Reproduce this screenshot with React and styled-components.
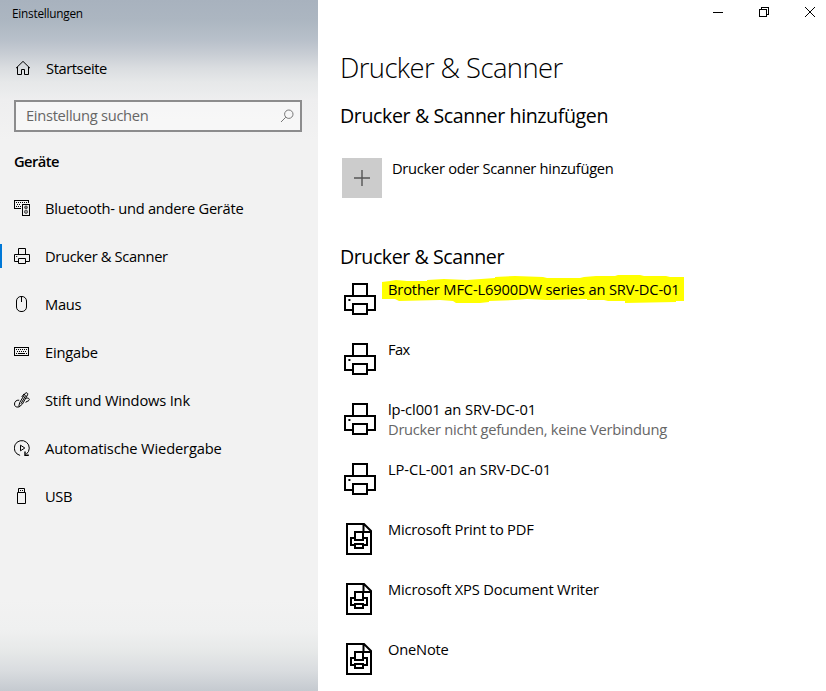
import React from "react";
import styled, { createGlobalStyle } from "styled-components";

const GlobalStyle = createGlobalStyle`
  * { box-sizing: border-box; }
  body {
    margin: 0;
    background: #fff;
    color: #000;
    font-family: "Open Sans", "Noto Sans", sans-serif;
    overflow: hidden;
  }
`;

const Window = styled.div`
  display: flex;
  width: 826px;
  height: 691px;
  background: #fff;
`;

const Sidebar = styled.aside`
  display: flex;
  flex-direction: column;
  width: 318px;
  flex: none;
  background:
    linear-gradient(
      180deg,
      #a8b2be 0,
      #acb6c1 20px,
      #b8c0ca 40px,
      #c8cdd4 54px,
      #dadde0 68px,
      #e6e8e9 82px,
      #eeeeef 100px,
      #f2f2f2 140px,
      #f2f2f2 600px,
      #eff0f0 630px,
      #e7e9e9 650px,
      #d9dcdf 671px,
      #c5cad0 691px
    );
`;

const Label = styled.span`
  font-size: 14.7px;
  line-height: 20px;
  letter-spacing: ${(p) => p.$tracking || 0}px;
  white-space: nowrap;
`;

const WindowTitle = styled.div`
  height: 44px;
  padding: 3px 0 0 12px;
  font-size: 11.8px;
  line-height: 20px;
  letter-spacing: -0.24px;
`;

const NavItem = styled.a`
  display: flex;
  align-items: center;
  gap: 15px;
  height: 48px;
  padding-left: 14px;
`;

const HomeItem = styled(NavItem)`
  gap: 14px;
  padding-left: 15px;
`;

const ActiveNavItem = styled(NavItem)`
  background: linear-gradient(#0078d7, #0078d7) 0 50% / 2px 24px no-repeat;
`;

const SearchBox = styled.div`
  display: flex;
  align-items: center;
  justify-content: space-between;
  width: 288px;
  height: 32px;
  margin: 8px 0 0 14px;
  padding: 0 6px 0 10px;
  border: 2px solid #8c8c8d;
  background: rgba(255, 255, 255, 0.45);
  color: #666;
`;

const SearchText = styled(Label)`
  padding-bottom: 2px;
`;

const Category = styled.h3`
  margin: 0;
  padding: 19px 0 13px 14px;
  font-size: 14.7px;
  font-weight: 600;
  line-height: 20px;
  letter-spacing: -0.54px;
`;

const Main = styled.main`
  display: flex;
  flex-direction: column;
  flex: 1;
  padding-left: 22px;
`;

const Caption = styled.div`
  display: flex;
  justify-content: flex-end;
  gap: 36px;
  height: 24px;
  padding: 7px 11px 0 0;
`;

const PageTitle = styled.h1`
  margin: 24px 0 0;
  padding-top: 7px;
  font-size: 27.4px;
  font-weight: 340;
  line-height: 40px;
  letter-spacing: -0.58px;
`;

const SectionTitle = styled.h2`
  margin: ${(p) => p.$top}px 0 0;
  font-size: 19.6px;
  font-weight: 400;
  line-height: 28px;
  letter-spacing: ${(p) => p.$tracking}px;
`;

const AddButton = styled.div`
  display: flex;
  gap: 10px;
  height: 40px;
  margin: 28px 0 0 2px;
`;

const AddTile = styled.div`
  display: grid;
  place-items: center;
  width: 40px;
  height: 40px;
  background: #ccc;
`;

const PrinterList = styled.div`
  display: flex;
  flex-direction: column;
  margin-top: 8px;
`;

const PrinterRow = styled.div`
  display: flex;
  height: 60px;
  padding-left: 4px;
`;

const IconCell = styled.div`
  width: 32px;
  height: 32px;
  margin: 4px 12px 0 0;
`;

const PrinterText = styled.div`
  position: relative;
  display: flex;
  flex-direction: column;
`;

const PrinterName = styled(Label)`
  position: relative;
`;

const PrinterStatus = styled(Label)`
  color: #666;
`;

const MarkerShape = styled.svg`
  position: absolute;
  left: -6px;
  top: -5px;
`;

const Icon = styled.svg`
  display: block;
  flex: none;
  fill: none;
  stroke: ${(p) => p.$color || "#000"};
`;

const crisp = { shapeRendering: "crispEdges" };

function PrinterIcon({ size }) {
  return (
    <Icon width={size} height={size} viewBox="0 0 16 16">
      <path d="M4.5 6.5V.5H11.5V6.5M4.5 13.5H.5V6.5H15.5V13.5H11.5M4.5 10.5H11.5V15.5H4.5Z" />
      <path d="M2.2 8.5H3.2" />
    </Icon>
  );
}

function DocumentPrinterIcon() {
  return (
    <Icon width="32" height="32" viewBox="0 0 32 32" strokeWidth="2">
      <path d="M3 1H20L27 8V31H3ZM19.5 1V9H27" />
      <path d="M11 17V9H19V17ZM11 15H7V22H11M19 15H23V22H19M11 21H19V25H11Z" />
    </Icon>
  );
}

function HomeIcon() {
  return (
    <Icon width="17" height="16" viewBox="0 0 17 16">
      <path d="M1 8.2L8 1.4L15 8.2M2.5 7V14.5H6.5V9.5H9.5V14.5H13.5V7" />
    </Icon>
  );
}

function SearchIcon() {
  return (
    <Icon width="14" height="14" viewBox="0 0 14 14" $color="#777">
      <circle cx="8.8" cy="5.2" r="4.2" />
      <path d="M5.8 8.2L1 13" />
    </Icon>
  );
}

function DevicesIcon() {
  return (
    <Icon width="16" height="16" viewBox="0 0 16 16">
      <g {...crisp}>
        <path d="M14.5 3V.5H.5V8.5H7M8.5 4.5H15.5V15.5H8.5Z" />
        <path d="M2 2.5H13M3 4.5H7M2 6.5H7" strokeDasharray="1 1" />
      </g>
      <circle cx="12" cy="7.4" r="1.4" fill="#777" stroke="#444" />
      <circle cx="12" cy="11.8" r="1.6" fill="#999" stroke="#555" />
    </Icon>
  );
}

function MouseIcon() {
  return (
    <Icon width="16" height="16" viewBox="0 0 16 16">
      <rect x="2.5" y=".5" width="10" height="15" rx="4.5" />
      <path d="M7.5 1V6" />
    </Icon>
  );
}

function KeyboardIcon() {
  return (
    <Icon width="16" height="16" viewBox="0 0 16 16" {...crisp}>
      <path d="M.5 3.5H14.5V11.5H.5Z" />
      <path d="M2 5.5H13M3 7.5H13" strokeDasharray="1 1" />
      <path d="M2 9.5H3M4 9.5H11M12 9.5H13" />
    </Icon>
  );
}

function PenIcon() {
  return (
    <Icon width="16" height="16" viewBox="0 0 16 16">
      <path d="M4.7 14.8L5.7 10.6L11.2 1.4C12.2 0 14.4 1 13.6 2.8L8.4 12.1L4.7 15.3M11.9 3.2L6.9 11.8" />
      <path d="M5.2 8.2C2.2 7.8.5 9.8.5 12C.5 14.3 2 15.4 4.4 15" />
      <path d="M7.7 5L10.2 1.7M12.1 6.2C14.6 5.7 16 7 15 8.3C14 9.8 11.8 9 11.8 10.6" />
    </Icon>
  );
}

function AutoplayIcon() {
  return (
    <Icon width="16" height="16" viewBox="0 0 16 16">
      <path d="M6.1 15.4A7.5 7.5 0 1 1 12.4 14" />
      <path d="M6.5 5.2V10.8L10.8 8Z" />
      <path d="M11 11.6V15.3H14.8" strokeWidth="1.4" />
    </Icon>
  );
}

function UsbIcon() {
  return (
    <Icon width="16" height="16" viewBox="0 0 16 16">
      <path d="M4.5 4.5V.5H10.5V4.5M3.5 4.5H11.5V15.5H3.5Z" />
      <path d="M6 2.5H7M8 2.5H9" />
    </Icon>
  );
}

const navItems = [
  { text: "Bluetooth- und andere Geräte", tracking: -0.27, icon: <DevicesIcon /> },
  { text: "Drucker & Scanner", tracking: -0.34, icon: <PrinterIcon size={16} />, active: true },
  { text: "Maus", tracking: -0.3, icon: <MouseIcon /> },
  { text: "Eingabe", tracking: -0.2, icon: <KeyboardIcon /> },
  { text: "Stift und Windows Ink", tracking: -0.19, icon: <PenIcon /> },
  { text: "Automatische Wiedergabe", tracking: -0.16, icon: <AutoplayIcon /> },
  { text: "USB", tracking: -0.4, icon: <UsbIcon /> },
];

const printers = [
  { name: "Brother MFC-L6900DW series an SRV-DC-01", tracking: -0.16, marked: true },
  { name: "Fax", tracking: -0.6 },
  {
    name: "lp-cl001 an SRV-DC-01",
    tracking: -0.1,
    status: "Drucker nicht gefunden, keine Verbindung",
  },
  { name: "LP-CL-001 an SRV-DC-01", tracking: -0.08 },
  { name: "Microsoft Print to PDF", tracking: -0.21, document: true },
  { name: "Microsoft XPS Document Writer", tracking: -0.18, document: true },
  { name: "OneNote", tracking: -0.2, document: true },
];

function Marker() {
  return (
    <MarkerShape width="304" height="30" viewBox="0 0 304 30">
      <path
        fill="#ff0"
        d="M0 8L8 7L14 6L25 7H45V6L62 5L85 6L113 4V3L133 2L161 3L165 4H198L202 3L214 2H233L236 1H258L262 2H284L288 3H302V27H294V28L243 29V27H226L222 26H205V25L165 26L145 25L133 26L107 27V28L98 29H74L71 27L58 26L17 27L13 25H0Z"
      />
    </MarkerShape>
  );
}

export default function App() {
  return (
    <Window>
      <GlobalStyle />
      <Sidebar>
        <WindowTitle>Einstellungen</WindowTitle>
        <HomeItem>
          <HomeIcon />
          <Label $tracking={-0.42}>Startseite</Label>
        </HomeItem>
        <SearchBox>
          <SearchText $tracking={-0.3}>Einstellung suchen</SearchText>
          <SearchIcon />
        </SearchBox>
        <Category>Geräte</Category>
        {navItems.map(({ text, tracking, icon, active }) => {
          const Item = active ? ActiveNavItem : NavItem;
          return (
            <Item key={text}>
              {icon}
              <Label $tracking={tracking}>{text}</Label>
            </Item>
          );
        })}
      </Sidebar>
      <Main>
        <Caption>
          <Icon width="10" height="10" viewBox="0 0 10 10" {...crisp}>
            <path d="M0 5.5H10" />
          </Icon>
          <Icon width="10" height="10" viewBox="0 0 10 10" {...crisp}>
            <path d="M.5 2.5H7.5V9.5H.5ZM2.5 2.5V.5H9.5V7.5H7.5" />
          </Icon>
          <Icon width="10" height="10" viewBox="0 0 10 10">
            <path d="M0 0L10 10M10 0L0 10" />
          </Icon>
        </Caption>
        <PageTitle>Drucker &amp; Scanner</PageTitle>
        <SectionTitle $top={14} $tracking={-0.39}>
          Drucker &amp; Scanner hinzufügen
        </SectionTitle>
        <AddButton>
          <AddTile>
            <Icon width="16" height="16" viewBox="0 0 16 16" $color="#555">
              <path d="M8 0V16M0 8H16" strokeWidth="1.4" />
            </Icon>
          </AddTile>
          <Label $tracking={-0.29}>Drucker oder Scanner hinzufügen</Label>
        </AddButton>
        <SectionTitle $top={45} $tracking={-0.44}>
          Drucker &amp; Scanner
        </SectionTitle>
        <PrinterList>
          {printers.map((p) => (
            <PrinterRow key={p.name}>
              <IconCell>{p.document ? <DocumentPrinterIcon /> : <PrinterIcon size={32} />}</IconCell>
              <PrinterText>
                {p.marked && <Marker />}
                <PrinterName $tracking={p.tracking}>{p.name}</PrinterName>
                {p.status && <PrinterStatus $tracking={-0.27}>{p.status}</PrinterStatus>}
              </PrinterText>
            </PrinterRow>
          ))}
        </PrinterList>
      </Main>
    </Window>
  );
}
